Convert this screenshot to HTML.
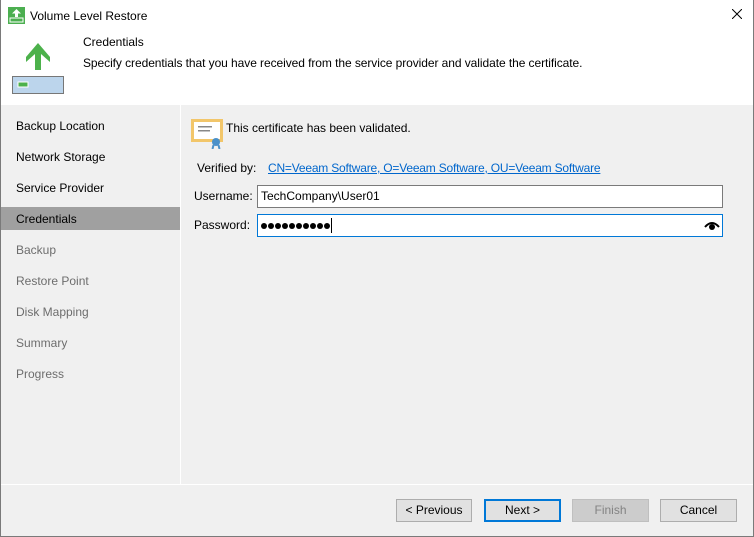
<!DOCTYPE html>
<html><head><style>
*{margin:0;padding:0;box-sizing:border-box}
body{width:754px;height:537px;overflow:hidden;font-family:"Liberation Sans",sans-serif;font-size:12px;color:#000;background:#f0f0f0;position:relative}
.win{position:absolute;left:0;top:0;width:754px;height:537px;border:1px solid #7a7a7a;border-top:none}
.abs{position:absolute;white-space:nowrap}
.hdr{position:absolute;left:1px;top:0;width:752px;height:105px;background:#fff}
.nav{position:absolute;left:16px;font-size:12px}
.dis{color:#6d6d6d}
.btn{position:absolute;top:499px;height:23px;border:1px solid #adadad;background:#e1e1e1;text-align:center;line-height:21px;font-size:12px}
.inp{position:absolute;left:257px;width:466px;height:23px;background:#fff;border:1px solid #7a7a7a;padding-left:3px;line-height:21px}
.dot{display:inline-block;width:6px;height:6px;border-radius:50%;background:#000;margin-right:1px;vertical-align:middle}
</style></head><body>
<div class="hdr"></div>
<svg class="abs" style="left:8px;top:7px" width="17" height="17" viewBox="0 0 17 17"><rect x="0" y="0" width="17" height="17" fill="#4caf50"/><path d="M8.5 2 L4 6.5 H7 V10 H10 V6.5 H13 Z" fill="#fff"/><rect x="2" y="11" width="13" height="4" fill="none" stroke="#fff"/></svg>
<div class="abs" style="left:30px;top:9px;font-size:12px">Volume Level Restore</div>
<svg class="abs" style="left:732px;top:9px" width="10" height="10" viewBox="0 0 10 10"><path d="M0 0 L10 10 M10 0 L0 10" stroke="#000" stroke-width="1"/></svg>
<svg class="abs" style="left:12px;top:42px" width="52" height="52" viewBox="0 0 52 52"><path d="M12 1 L0 15 V20 L9 12 V28 H15 V12 L24 20 V15 Z" fill="#4cb14b" transform="translate(14,0)"/><rect x="0.5" y="34.5" width="51" height="17" fill="#bcd5ec" stroke="#777"/><rect x="6" y="40" width="10" height="5" fill="#4cb14b" stroke="#fff"/></svg>
<div class="abs" style="left:83px;top:35px">Credentials</div>
<div class="abs" style="left:83px;top:56px;letter-spacing:-0.07px">Specify credentials that you have received from the service provider and validate the certificate.</div>
<div class="abs" style="left:180px;top:105px;width:1px;height:379px;background:#fff"></div>
<div class="abs" style="left:1px;top:207px;width:179px;height:23px;background:#a0a0a0"></div>
<div class="nav abs" style="top:119px">Backup Location</div>
<div class="nav abs" style="top:150px">Network Storage</div>
<div class="nav abs" style="top:181px">Service Provider</div>
<div class="nav abs" style="top:212px">Credentials</div>
<div class="nav abs dis" style="top:243px">Backup</div>
<div class="nav abs dis" style="top:274px">Restore Point</div>
<div class="nav abs dis" style="top:305px">Disk Mapping</div>
<div class="nav abs dis" style="top:336px">Summary</div>
<div class="nav abs dis" style="top:367px">Progress</div>
<svg class="abs" style="left:191px;top:119px" width="32" height="30" viewBox="0 0 32 30"><rect x="0" y="0" width="32" height="23" fill="#f2c66a"/><rect x="3" y="3" width="26" height="17" fill="#fff"/><rect x="7" y="7" width="14" height="1.5" fill="#888"/><rect x="7" y="11" width="12" height="1.5" fill="#888"/><circle cx="25" cy="23" r="4" fill="#4a90c9"/><path d="M22.5 26 L21.5 30 M27.5 26 L28.5 30" stroke="#4a90c9" stroke-width="2"/></svg>
<div class="abs" style="left:226px;top:121px">This certificate has been validated.</div>
<div class="abs" style="left:197px;top:161px">Verified by:</div>
<div class="abs" style="left:268px;top:161px;color:#0066cc;text-decoration:underline;letter-spacing:-0.2px">CN=Veeam Software, O=Veeam Software, OU=Veeam Software</div>
<div class="abs" style="left:194px;top:189px">Username:</div>
<div class="inp" style="top:185px">TechCompany\User01</div>
<div class="abs" style="left:194px;top:218px">Password:</div>
<div class="inp" style="top:214px;border-color:#0078d7;padding-left:3px"><span class="dot"></span><span class="dot"></span><span class="dot"></span><span class="dot"></span><span class="dot"></span><span class="dot"></span><span class="dot"></span><span class="dot"></span><span class="dot"></span><span class="dot"></span><span style="display:inline-block;width:1px;height:15px;background:#000;vertical-align:middle"></span></div>
<svg class="abs" style="left:704px;top:220px" width="16" height="12" viewBox="0 0 16 12"><path d="M1 7 Q8 -1 15 7" fill="none" stroke="#000" stroke-width="2"/><circle cx="8" cy="7" r="3" fill="#000"/></svg>
<div class="abs" style="left:1px;top:484px;width:752px;height:1px;background:#fff"></div>
<div class="btn" style="left:396px;width:76px">&lt; Previous</div>
<div class="btn" style="left:484px;width:77px;border:2px solid #0078d7;line-height:19px">Next &gt;</div>
<div class="btn" style="left:572px;width:77px;background:#cccccc;border-color:#bfbfbf;color:#838383">Finish</div>
<div class="btn" style="left:660px;width:77px">Cancel</div>
<div class="win"></div>
</body></html>
